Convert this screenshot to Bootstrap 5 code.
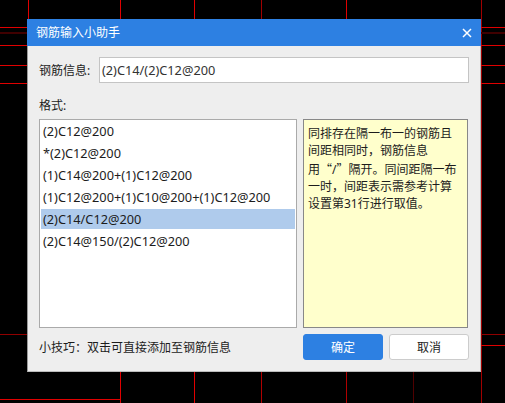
<!DOCTYPE html>
<html lang="zh">
<head>
<meta charset="utf-8">
<link href="https://cdn.jsdelivr.net/npm/bootstrap@5.3.0/dist/css/bootstrap.min.css" rel="stylesheet">
<style>
html,body{margin:0;height:403px;overflow:hidden;background:#000}
body{font-family:"Noto Sans","Noto Sans CJK SC",sans-serif;font-size:12px;color:#1c1c1c;line-height:22px}
.stage{width:505px;height:403px;padding:19px 24px 0 27px}
.cad-lines{position:absolute;left:0;top:0;width:505px;height:403px}
.dlg{position:relative;width:454px;height:353px;background:#eee;border:1px solid #bbb;border-top:0;border-left-color:#999}
.dlg-head{height:27px;background:#2d80e2;color:#fff;padding:0 9px;margin:0 -1px 0 -1px;font-size:12px}
.dlg-title{padding-top:1px}
.dlg-close{width:10px;height:10px}
.dlg-body{padding:11px 11px 0 11px}
.info-label{width:60px;white-space:nowrap;padding-top:1px}
.info-input{width:370px;height:26px;line-height:25px;background:#fff;border:1px solid #c4c4c4;padding:0 2px;color:#333;font-size:12.75px}
.fmt-label{margin:11px 0 3px;height:22px;line-height:24px}
.panes{height:209px;gap:6px}
.fmt-list{width:258px;background:#fff;border:1px solid #aaa;padding:1px 1px 0 1px}
.fmt-row{height:20px;line-height:21px;padding:0 2px;margin-bottom:2px;white-space:nowrap;font-size:12.75px}
.fmt-row.picked{background:#afcbec}
.tip-box{width:165px;background:#ffc;border:1px solid #888;padding:5px 4px;line-height:17.35px}
.cjk-run{font-family:"Noto Sans CJK SC",sans-serif}
.foot{margin-top:6px;gap:6px}
.foot-text{width:258px;white-space:nowrap;padding-top:1px}
.act{width:80px;height:26px;font-size:12px;line-height:24px;padding:1px 0 0;border-radius:3px}
.act-main{background:#2d80e2;border:1px solid #2d80e2;color:#fff}
.act-alt{background:#fff;border:1px solid #ccc;color:#1c1c1c}
.foot-btns{gap:6px}
</style>
</head>
<body>
<div class="stage position-relative">
<svg class="cad-lines" viewBox="0 0 505 403" fill="none" stroke="#e00000" stroke-width="1" shape-rendering="crispEdges">
<path d="M28.5 0V19M120.5 0V19M194.5 0V19M346.5 0V19"/>
<path d="M261.5 0V19" stroke="#a00000"/>
<path d="M481.5 0V403" stroke="#a00000"/>
<path d="M0 27.5H27M481 27.5H505M0 45.5H27M481 45.5H505M0 65.5H27M481 65.5H505M0 83.5H27M481 83.5H505"/>
<path d="M0 32.5H27M481 32.5H505" stroke="#400000" stroke-width="2"/>
<path d="M0 334.5H27M481 334.5H505" stroke="#900000"/>
<path d="M481 345.5H505"/>
<path d="M120.5 372V403M194.5 372V403"/>
<path d="M261.5 372V403M346.5 372V403" stroke="#b00000"/>
<path d="M413.5 372V403" stroke="#500000"/>
<path d="M0 399.5H120"/>
</svg>
<div class="dlg">
  <div class="dlg-head d-flex align-items-center justify-content-between">
    <span class="dlg-title">钢筋输入小助手</span>
    <svg class="dlg-close" viewBox="0 0 10 10" stroke="#fff" stroke-width="1.5"><path d="M1 1L9 9M9 1L1 9"/></svg>
  </div>
  <div class="dlg-body">
    <div class="d-flex align-items-center">
      <span class="info-label">钢筋信息:</span>
      <div class="info-input">(2)C14/(2)C12@200</div>
    </div>
    <div class="fmt-label">格式:</div>
    <div class="panes d-flex">
      <div class="fmt-list">
        <div class="fmt-row">(2)C12@200</div>
        <div class="fmt-row">*(2)C12@200</div>
        <div class="fmt-row">(1)C14@200+(1)C12@200</div>
        <div class="fmt-row">(1)C12@200+(1)C10@200+(1)C12@200</div>
        <div class="fmt-row picked">(2)C14/C12@200</div>
        <div class="fmt-row">(2)C14@150/(2)C12@200</div>
      </div>
      <div class="tip-box">同排存在隔一布一的钢筋且<br>间距相同时&#xFF0C;钢筋信息<br>用<span class="cjk-run">&#x201C;</span>/<span class="cjk-run">&#x201D;</span>隔开。同间距隔一布<br>一时&#xFF0C;间距表示需参考计算<br>设置第31行进行取值。</div>
    </div>
    <div class="foot d-flex align-items-center">
      <div class="foot-text">小技巧&#xFF1A;双击可直接添加至钢筋信息</div>
      <div class="foot-btns d-flex">
        <button type="button" class="btn act act-main">确定</button>
        <button type="button" class="btn act act-alt">取消</button>
      </div>
    </div>
  </div>
</div>
</div>
<script src="https://cdn.jsdelivr.net/npm/bootstrap@5.3.0/dist/js/bootstrap.bundle.min.js"></script>
</body>
</html>
